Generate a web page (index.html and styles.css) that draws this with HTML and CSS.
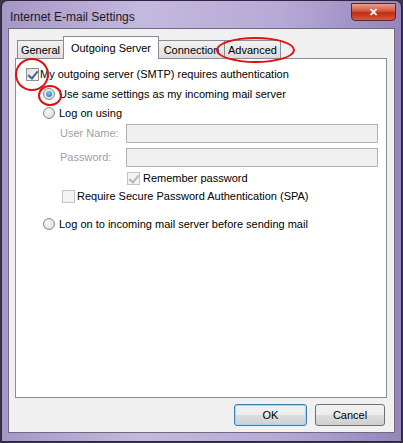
FILE: index.html
```html
<!DOCTYPE html>
<html lang="en">
<head>
    <meta charset="UTF-8">
    <title>Internet E-mail Settings</title>
    <link rel="stylesheet" href="styles.css">
</head>
<body>

<div class="window">
    <!-- 标题栏 -->
    <div class="titlebar">
        <span class="title">Internet E-mail Settings</span>
        <span class="close-btn">&#x2715;</span>
    </div>

    <div class="client">
        <!-- 选项卡 -->
        <div class="tabs">
            <div class="tab general">General</div>
            <div class="tab active">Outgoing Server</div>
            <div class="tab connection">Connection</div>
            <div class="tab advanced">Advanced</div>
        </div>

        <div class="panel">
            <div class="row first">
                <span class="check checked"></span>
                <span>My outgoing server (SMTP) requires authentication</span>
            </div>
            <div class="row indent same">
                <span class="radio selected"></span>
                <span>Use same settings as my incoming mail server</span>
            </div>
            <div class="row indent logon">
                <span class="radio"></span>
                <span>Log on using</span>
            </div>
            <div class="field user">
                <label class="disabled">User Name:</label>
                <span class="input"></span>
            </div>
            <div class="field pass">
                <label class="disabled">Password:</label>
                <span class="input"></span>
            </div>
            <div class="row remember">
                <span class="check checked dim"></span>
                <span>Remember password</span>
            </div>
            <div class="row spa">
                <span class="check dim"></span>
                <span>Require Secure Password Authentication (SPA)</span>
            </div>
            <div class="row indent last">
                <span class="radio"></span>
                <span>Log on to incoming mail server before sending mail</span>
            </div>
        </div>

        <div class="buttons">
            <span class="btn default">OK</span>
            <span class="btn cancel">Cancel</span>
        </div>
    </div>

    <!-- 红色标注圈 -->
    <span class="mark mark-check"></span>
    <span class="mark mark-radio"></span>
    <span class="mark mark-tab"></span>
</div>

</body>
</html>
```

FILE: styles.css
```css
* {
    box-sizing: border-box;
}
body {
    margin: 0;
    background: #3a3448;
    font-family: "Liberation Sans", Arial, sans-serif;
    font-size: 11px;
    color: #000;
}
/* 窗口外框 */
.window {
    position: relative;
    width: 401px;
    height: 442px;
    margin-left: 1px;
    border: 1px solid #2c2640;
    border-radius: 7px 7px 0 0;
    background: linear-gradient(to right, #a597c6 0%, #c4b9de 35%, #b7a9d6 70%, #9384bb 100%);
    padding: 0 6px 8px 6px;
    display: flex;
    flex-direction: column;
}
.titlebar {
    height: 27px;
    display: flex;
    align-items: flex-start;
    justify-content: space-between;
}
.title {
    margin-top: 9px;
    margin-left: 2px;
    color: #1a1a1a;
    font-size: 12px;
}
.close-btn {
    margin-top: 2px;
    margin-right: -1px;
    width: 45px;
    height: 18px;
    border: 1px solid #5a2a2a;
    border-radius: 0 0 4px 4px;
    background: linear-gradient(to bottom, #e8a08c 0%, #d4553c 45%, #c02c14 55%, #d8583c 100%);
    color: #fff;
    font-weight: bold;
    font-size: 11px;
    text-align: center;
    line-height: 16px;
}
/* 客户区 */
.client {
    flex: 1;
    background: #f0f0f0;
    border: 1px solid #6e6a80;
    padding: 6px 7px 0 6px;
    display: flex;
    flex-direction: column;
}
.tabs {
    display: flex;
    align-items: flex-end;
    height: 23px;
    margin-left: 2px;
}
.tab {
    height: 18px;
    padding-top: 3px;
    text-align: center;
    border: 1px solid #898c95;
    border-bottom: none;
    border-right: none;
    background: linear-gradient(to bottom, #f2f2f2, #dcdcdc);
    color: #000;
    white-space: nowrap;
}
.tab.general {
    width: 46px;
}
.tab.connection {
    width: 65px;
    border-left: none;
}
.tab.advanced {
    width: 57px;
    border-right: 1px solid #898c95;
}
.tab.active {
    width: 96px;
    height: 23px;
    padding-top: 5px;
    background: #fff;
    border: 1px solid #898c95;
    border-bottom: none;
    margin-bottom: -1px;
    position: relative;
    z-index: 1;
}
.panel {
    height: 340px;
    background: #fff;
    border: 1px solid #898c95;
    padding: 6px 0 0 10px;
}
.row {
    display: flex;
    align-items: center;
    height: 18px;
    white-space: nowrap;
}
.row.indent {
    margin-left: 17px;
}
.row.same {
    margin-top: 2px;
}
.row.logon {
    margin-top: 1px;
}
.row.last {
    margin-top: 10px;
}
.check {
    width: 13px;
    height: 13px;
    border: 1px solid #8e8f8f;
    background: linear-gradient(135deg, #e0e0e0, #fbfbfb);
    margin-right: 1px;
    position: relative;
}
.check.checked::after {
    content: "";
    position: absolute;
    left: 3px;
    top: 0px;
    width: 4px;
    height: 8px;
    border: solid #4a5f97;
    border-width: 0 2px 2px 0;
    transform: rotate(40deg);
}
.check.dim {
    border-color: #c4c4c4;
    background: #f4f4f4;
}
.check.dim.checked::after {
    border-color: #b8b8b8;
}
.radio {
    width: 12px;
    height: 12px;
    border-radius: 50%;
    border: 1px solid #8a8a8a;
    background: radial-gradient(circle at 40% 40%, #fafafa, #d2d2d2);
    margin-right: 4px;
    position: relative;
}
.radio.selected::after {
    content: "";
    position: absolute;
    left: 2px;
    top: 2px;
    width: 6px;
    height: 6px;
    border-radius: 50%;
    background: radial-gradient(circle at 40% 35%, #7fd0f5, #1b5c9c);
}
.disabled {
    color: #a0a0a0;
}
.field {
    display: flex;
    align-items: center;
    margin-left: 34px;
    height: 20px;
}
.field.user {
    margin-top: 1px;
}
.field.pass {
    margin-top: 4px;
}
.field label {
    width: 66px;
}
.input {
    width: 252px;
    height: 19px;
    background: #f0f0f0;
    border: 1px solid #adb2b5;
}
.remember {
    margin-left: 101px;
    margin-top: 2px;
}
.remember .check {
    margin-right: 3px;
}
.spa {
    margin-left: 36px;
}
.spa .check {
    margin-right: 2px;
}
.buttons {
    display: flex;
    justify-content: flex-end;
    gap: 8px;
    padding: 6px 2px 0 0;
}
.btn {
    height: 22px;
    border: 1px solid #707070;
    border-radius: 3px;
    background: linear-gradient(to bottom, #f2f2f2 0%, #ebebeb 50%, #dddddd 51%, #cfcfcf 100%);
    text-align: center;
    line-height: 20px;
}
.btn.default {
    width: 73px;
    border-color: #3c7fb1;
    box-shadow: inset 0 0 0 1px #9fd6f5;
}
.btn.cancel {
    width: 70px;
}
/* 标注 */
.mark {
    position: absolute;
    border: 2px solid #e01010;
    border-radius: 50%;
}
.mark-check {
    left: 13px;
    top: 57px;
    width: 34px;
    height: 33px;
}
.mark-radio {
    left: 36px;
    top: 84px;
    width: 24px;
    height: 21px;
}
.mark-tab {
    left: 214px;
    top: 36px;
    width: 79px;
    height: 26px;
}
```
